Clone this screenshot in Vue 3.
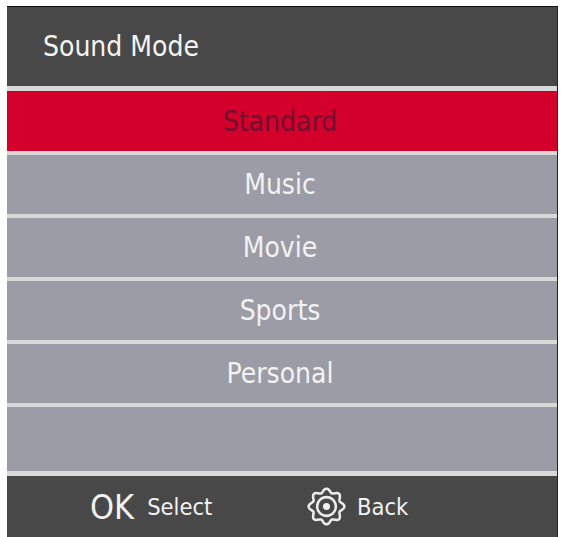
<script setup>
const rows = [
  { label: 'Standard', active: true },
  { label: 'Music' },
  { label: 'Movie' },
  { label: 'Sports' },
  { label: 'Personal' },
  { label: '' },
]

// Scalloped eight-lobed outline of the gear, centred in a 40x40 box.
const points = []
for (let i = 0; i < 240; i++) {
  const a = (i / 240) * Math.PI * 2 - Math.PI / 2
  const wave = Math.cos(8 * (a + Math.PI / 2))
  const r = 16.4 + 1.9 * wave
  points.push(`${(20 + r * Math.cos(a)).toFixed(2)} ${(20 + r * Math.sin(a)).toFixed(2)}`)
}
const gearPath = `M${points.join('L')}Z`
</script>

<template>
  <div class="page">
    <div class="panel">
      <header class="head">Sound Mode</header>
      <ul class="list">
        <li v-for="(r, i) in rows" :key="i" class="row" :class="{ active: r.active, last: i === rows.length - 1 }">{{ r.label }}</li>
      </ul>
      <footer class="foot">
        <div class="hint first">
          <span class="ok">OK</span>
          <span>Select</span>
        </div>
        <div class="hint second">
          <svg class="gear" viewBox="0 0 40 40" fill="none" stroke="#ececec" stroke-width="2.6" stroke-linejoin="round">
            <path :d="gearPath" />
            <circle cx="20" cy="20" r="9.6" />
            <circle cx="20" cy="20" r="3.6" fill="#f4f4f4" stroke="none" />
          </svg>
          <span>Back</span>
        </div>
      </footer>
    </div>
  </div>
</template>

<style>
html, body { margin: 0; background: #fff; }
</style>

<style scoped>
.page {
  width: 562px;
  height: 537px;
  padding: 6px 4px 0 7px;
  box-sizing: border-box;
  overflow: hidden;
  background: #fff;
  font-family: "DejaVu Sans Condensed", "DejaVu Sans", sans-serif;
  font-stretch: condensed;
}
.panel {
  display: flex;
  flex-direction: column;
  height: 531px;
  background: #484848;
  border-top: 1px solid #111;
  border-right: 1px solid #222;
  box-sizing: border-box;
}
.head {
  height: 79px;
  box-sizing: border-box;
  padding: 0 0 0 36px;
  display: flex;
  align-items: center;
  font-size: 28px;
  color: #f4f4f4;
  background: #484848;
}
.list {
  list-style: none;
  margin: 0;
  padding: 0;
  display: flex;
  flex-direction: column;
}
.row {
  height: 59px;
  box-sizing: content-box;
  padding-right: 4px;
  border-top: 4px solid #d8d8d8;
  display: flex;
  align-items: center;
  justify-content: center;
  font-size: 28px;
  line-height: 61px;
  color: #f2f2f2;
  background: #9b9ca5;
}
.row.active {
  height: 60px;
  border-top-width: 5px;
  background: #d3002c;
  color: #6f1030;
}
.row.last {
  height: 64px;
}
.foot {
  flex: 1;
  border-top: 5px solid #d8d8d8;
  display: flex;
  align-items: center;
  color: #f2f2f2;
  font-size: 23.5px;
  background: #484848;
}
.hint {
  display: flex;
  align-items: center;
}
.hint.first {
  margin-left: 83px;
  width: 217px;
  gap: 13px;
}
.hint.second {
  gap: 11px;
}
.ok {
  font-size: 34px;
}
.gear {
  width: 39px;
  height: 39px;
}
</style>
